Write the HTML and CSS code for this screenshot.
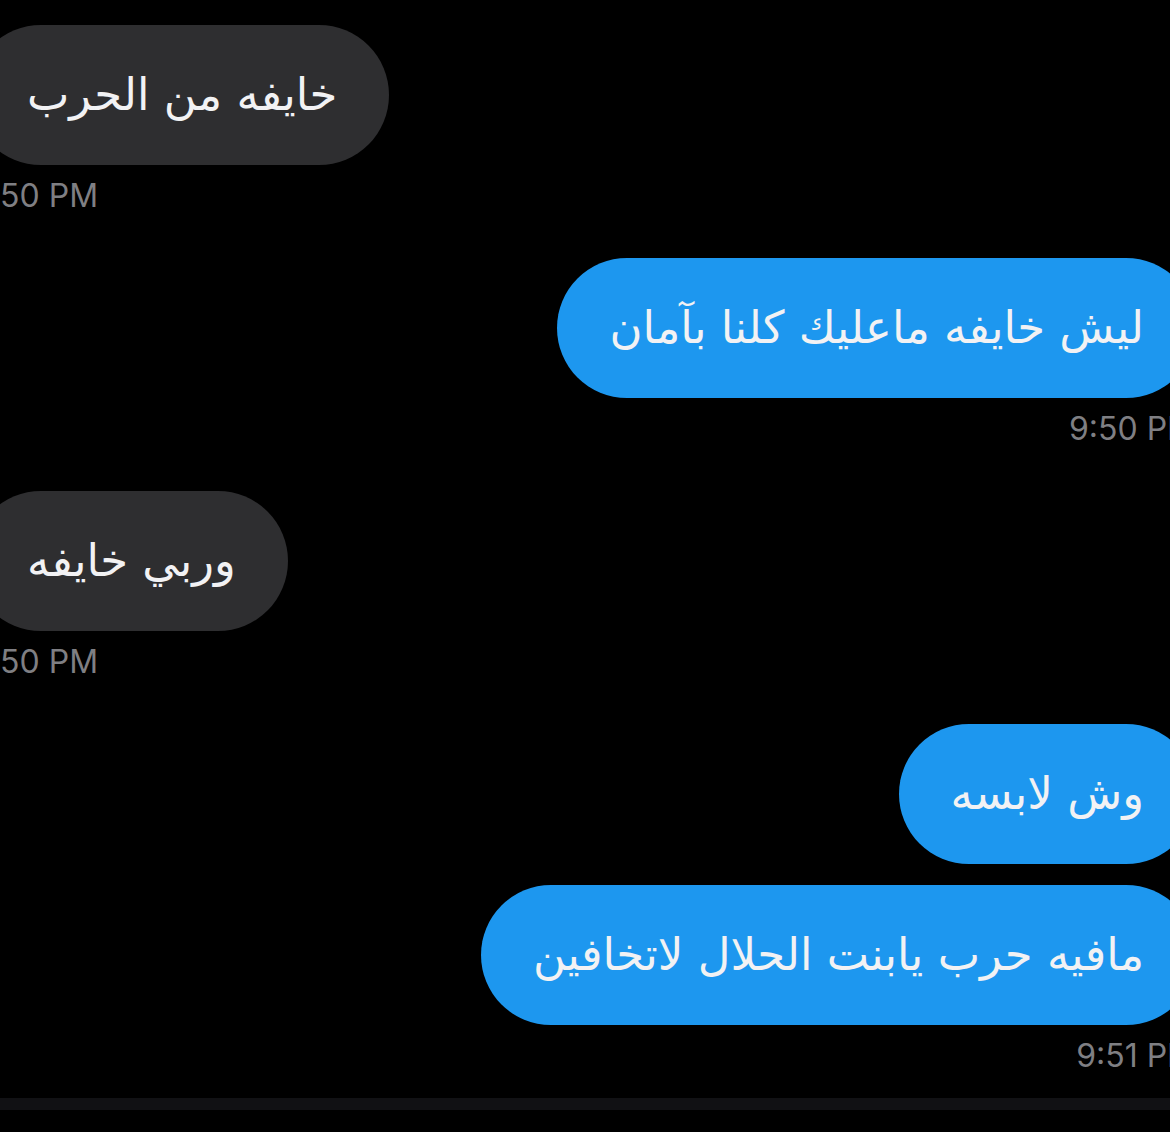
FILE: index.html
```html
<!DOCTYPE html>
<html lang="ar">
<head>
    <meta charset="UTF-8">
    <meta name="viewport" content="width=device-width, initial-scale=1.0">
    <title>Messages</title>
    <link rel="stylesheet" href="styles.css">
</head>
<body>
    <div class="thread">
        <div class="group incoming">
            <div class="bubble" dir="rtl">خايفه من الحرب</div>
            <div class="time">9:50 PM</div>
        </div>

        <div class="group outgoing">
            <div class="bubble" dir="rtl">ليش خايفه ماعليك كلنا بآمان</div>
            <div class="time">9:50 PM</div>
        </div>

        <div class="group incoming">
            <div class="bubble" dir="rtl">وربي خايفه</div>
            <div class="time">9:50 PM</div>
        </div>

        <div class="group outgoing">
            <div class="bubble" dir="rtl">وش لابسه</div>
            <div class="bubble" dir="rtl">مافيه حرب يابنت الحلال لاتخافين</div>
            <div class="time">9:51 PM</div>
        </div>
    </div>
    <div class="composer-edge"></div>
</body>
</html>
```

FILE: styles.css
```css
html, body {
    margin: 0;
    background: #000;
}

body {
    width: 1170px;
    height: 1132px;
    overflow: hidden;
    font-family: Inter, Roboto, sans-serif;
}

.thread {
    display: flex;
    flex-direction: column;
    margin: 0 -26px 0 -29px;
    padding-top: 25px;
}

.group {
    display: flex;
    flex-direction: column;
    gap: 21px;
    margin-bottom: 42px;
}

.group:last-child {
    margin-bottom: 22px;
}

.incoming {
    align-items: flex-start;
}

.outgoing {
    align-items: flex-end;
}

.bubble {
    font-family: "DejaVu Sans", "Noto Sans", sans-serif;
    font-size: 45px;
    line-height: 60px;
    color: #f2f2f4;
    padding: 40px 52px;
    border-radius: 70px;
    white-space: nowrap;
}

.incoming .bubble {
    background: #2e2e30;
    padding-left: 56px;
}

.outgoing .bubble {
    background: #1d97ef;
}

.time {
    margin-top: -10px;
    font-size: 32px;
    line-height: 40px;
    color: #7f7f83;
}

.composer-edge {
    height: 12px;
    background: #111114;
}
```
